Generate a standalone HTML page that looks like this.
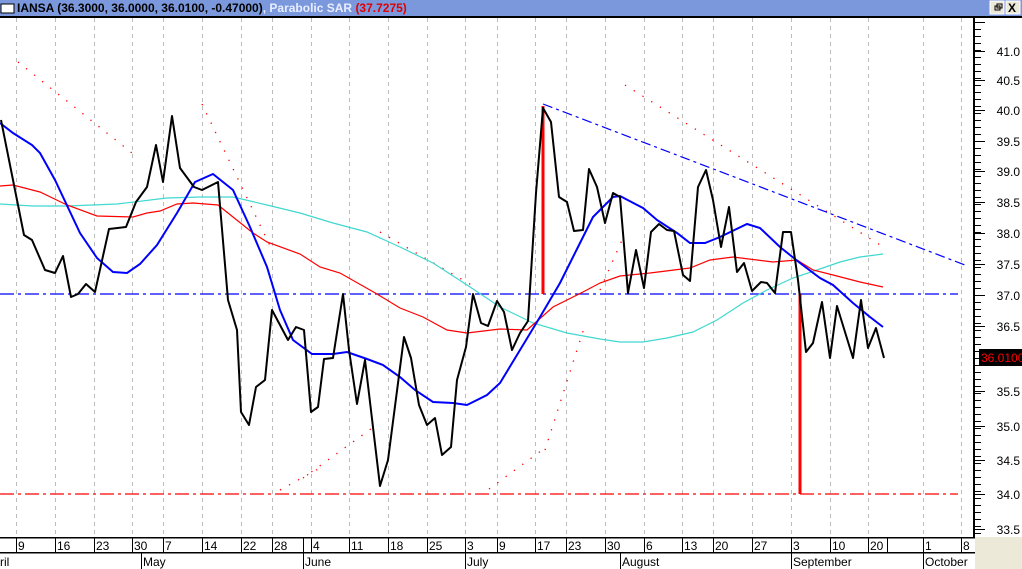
<!DOCTYPE html>
<html><head><meta charset="utf-8"><style>
html,body{margin:0;padding:0;background:#fff;width:1022px;height:569px;overflow:hidden}
svg{display:block;font-family:"Liberation Sans",sans-serif}
</style></head><body>
<svg width="1022" height="569" viewBox="0 0 1022 569" xmlns="http://www.w3.org/2000/svg">
<rect x="0" y="0" width="1022" height="569" fill="#fff"/>
<rect x="0" y="0" width="1022" height="16" fill="#7b98dd"/>
<rect x="1" y="4" width="13" height="9" fill="#fff" stroke="#000" stroke-width="1"/>
<text x="17" y="12" font-size="12" font-weight="bold"><tspan fill="#000">IANSA (36.3000, 36.0000, 36.0100, -0.47000)</tspan><tspan fill="#e8eeff">, Parabolic SAR </tspan><tspan fill="#e00000">(37.7275)</tspan></text>
<rect x="990" y="1" width="14" height="13" fill="#ece9d8" stroke="#fff"/>
<rect x="995" y="6" width="5" height="4" fill="none" stroke="#000"/>
<rect x="997" y="4" width="5" height="4" fill="none" stroke="#000"/>
<rect x="1006" y="1" width="14" height="13" fill="#ece9d8" stroke="#fff"/>
<text x="1008" y="12" font-size="12" font-weight="bold">X</text>
<rect x="0" y="16" width="1022" height="2" fill="#000"/>
<g stroke="#bbb" stroke-width="1" stroke-dasharray="4,4">
<line x1="16.5" y1="18" x2="16.5" y2="537"/><line x1="55.5" y1="18" x2="55.5" y2="537"/><line x1="94.5" y1="18" x2="94.5" y2="537"/><line x1="132.5" y1="18" x2="132.5" y2="537"/><line x1="163.5" y1="18" x2="163.5" y2="537"/><line x1="202.5" y1="18" x2="202.5" y2="537"/><line x1="241.5" y1="18" x2="241.5" y2="537"/><line x1="272.5" y1="18" x2="272.5" y2="537"/><line x1="311.5" y1="18" x2="311.5" y2="537"/><line x1="349.5" y1="18" x2="349.5" y2="537"/><line x1="388.5" y1="18" x2="388.5" y2="537"/><line x1="427.5" y1="18" x2="427.5" y2="537"/><line x1="465.5" y1="18" x2="465.5" y2="537"/><line x1="497.5" y1="18" x2="497.5" y2="537"/><line x1="535.5" y1="18" x2="535.5" y2="537"/><line x1="566.5" y1="18" x2="566.5" y2="537"/><line x1="605.5" y1="18" x2="605.5" y2="537"/><line x1="644.5" y1="18" x2="644.5" y2="537"/><line x1="682.5" y1="18" x2="682.5" y2="537"/><line x1="713.5" y1="18" x2="713.5" y2="537"/><line x1="752.5" y1="18" x2="752.5" y2="537"/><line x1="791.5" y1="18" x2="791.5" y2="537"/><line x1="830.5" y1="18" x2="830.5" y2="537"/><line x1="868.5" y1="18" x2="868.5" y2="537"/><line x1="923.5" y1="18" x2="923.5" y2="537"/><line x1="961.5" y1="18" x2="961.5" y2="537"/>
</g>
<g stroke="#f00" stroke-width="1.3" stroke-dasharray="1.3,9" fill="none">
<line x1="18" y1="62" x2="132" y2="153"/>
<line x1="202" y1="104" x2="272" y2="250"/>
<line x1="280" y1="490" x2="320" y2="468"/>
<line x1="303" y1="478" x2="375" y2="426"/>
<line x1="380" y1="232" x2="475" y2="287"/>
<line x1="489" y1="489" x2="545" y2="448"/>
<line x1="545" y1="450" x2="585" y2="325"/>
<line x1="600" y1="290" x2="622" y2="240"/>
<line x1="625" y1="85" x2="885" y2="248"/>
</g>
<line x1="0" y1="294" x2="958" y2="294" stroke="#00f" stroke-width="1.2" stroke-dasharray="14,4,3,4"/>
<line x1="0" y1="494" x2="958" y2="494" stroke="#f00" stroke-width="1.2" stroke-dasharray="14,4,3,4"/>
<line x1="543" y1="104" x2="965" y2="265" stroke="#00f" stroke-width="1.2" stroke-dasharray="10,4,3,4"/>
<polyline fill="none" stroke="#40d8d0" stroke-width="1.2" points="0,204 33,206 67,206 117,204 167,198 200,197 233,197 267,205 300,213 333,223 367,232 400,247 433,263 467,285 500,307 533,323 567,333 600,339 620,342 643,342 667,338 693,332 717,320 743,303 767,290 793,278 817,270 840,262 860,257 883,254"/>
<polyline fill="none" stroke="#f00" stroke-width="1.2" points="0,186 13,185 40,192 67,205 97,216 133,217 147,213 160,211 177,204 193,203 218,205 233,217 253,233 267,242 300,254 320,267 340,273 377,294 400,308 423,317 447,330 467,333 500,329 527,330 553,307 583,292 600,283 620,276 650,273 690,268 710,260 733,257 773,262 797,260 813,270 833,275 860,282 883,287"/>
<rect x="541.5" y="106" width="3" height="188" fill="#f00"/>
<rect x="798.5" y="294" width="3" height="200" fill="#f00"/>
<polyline fill="none" stroke="#00f" stroke-width="2" points="0,123 13,133 32,145 40,153 55,180 80,233 97,258 113,272 127,273 140,264 157,245 177,213 195,182 213,174 233,190 250,227 267,267 280,310 293,340 312,354 333,354 347,352 367,359 383,365 400,377 415,390 433,402 453,403 467,405 487,395 500,383 520,350 540,317 560,283 580,243 593,217 613,197 620,196 643,208 657,220 677,233 690,243 705,243 720,237 747,224 760,228 780,247 800,263 820,278 833,285 853,303 870,317 883,327"/>
<polyline fill="none" stroke="#000" stroke-width="2" stroke-linejoin="round" points="1,120 24,235 32,240 45,270 55,273 63,256 71,297 78,294 86,284 95,292 109,229 126,227 136,202 147,187 156,145 163,182 172,116 180,168 194,187 202,190 218,182 228,300 237,330 241,412 249,425 256,387 265,380 272,310 288,340 296,327 304,330 311,412 318,407 324,359 333,358 343,294 349,350 357,404 365,360 380,486 388,460 404,337 411,358 419,405 427,425 435,418 442,455 451,447 457,380 466,347 473,294 481,323 488,326 497,301 504,312 512,350 520,333 528,321 536,193 543,108 551,122 559,197 567,202 574,231 583,230 589,169 597,187 605,223 613,193 620,197 628,293 636,250 644,288 651,232 659,224 667,230 674,231 683,275 690,281 698,187 706,170 713,200 721,247 729,207 737,272 744,263 752,291 761,282 767,283 775,293 783,232 791,232 798,280 806,352 813,343 822,302 830,358 837,306 853,358 861,300 868,348 876,328 884,358"/>
<rect x="973" y="18" width="2" height="519" fill="#000"/>
<g stroke="#000" stroke-width="1">
<line x1="975" y1="51.5" x2="985" y2="51.5"/><line x1="975" y1="80.5" x2="985" y2="80.5"/><line x1="975" y1="110.5" x2="985" y2="110.5"/><line x1="975" y1="141.5" x2="985" y2="141.5"/><line x1="975" y1="171.5" x2="985" y2="171.5"/><line x1="975" y1="202.5" x2="985" y2="202.5"/><line x1="975" y1="233.5" x2="985" y2="233.5"/><line x1="975" y1="264.5" x2="985" y2="264.5"/><line x1="975" y1="295.5" x2="985" y2="295.5"/><line x1="975" y1="326.5" x2="985" y2="326.5"/><line x1="975" y1="358.5" x2="985" y2="358.5"/><line x1="975" y1="391.5" x2="985" y2="391.5"/><line x1="975" y1="426.5" x2="985" y2="426.5"/><line x1="975" y1="460.5" x2="985" y2="460.5"/><line x1="975" y1="494.5" x2="985" y2="494.5"/><line x1="975" y1="529.5" x2="985" y2="529.5"/><line x1="975" y1="22.5" x2="985" y2="22.5"/>
</g>
<line x1="978" y1="22" x2="978" y2="537" stroke="#000" stroke-width="6" stroke-dasharray="1,6"/>
<g font-size="12" fill="#000" text-anchor="end">
<text x="1020" y="56">41.0</text><text x="1020" y="85">40.5</text><text x="1020" y="115">40.0</text><text x="1020" y="146">39.5</text><text x="1020" y="176">39.0</text><text x="1020" y="207">38.5</text><text x="1020" y="238">38.0</text><text x="1020" y="269">37.5</text><text x="1020" y="300">37.0</text><text x="1020" y="331">36.5</text><text x="1020" y="396">35.5</text><text x="1020" y="431">35.0</text><text x="1020" y="465">34.5</text><text x="1020" y="499">34.0</text><text x="1020" y="534">33.5</text>
</g>
<rect x="979" y="349" width="43" height="17" fill="#000"/>
<text x="981" y="362" font-size="12" fill="#f00">36.01000</text>
<rect x="975" y="537" width="47" height="32" fill="#ece9d8"/>
<rect x="0" y="537" width="975" height="1.5" fill="#000"/>
<rect x="0" y="552" width="975" height="1.5" fill="#000"/>
<g stroke="#000" stroke-width="1">
<line x1="16.5" y1="538" x2="16.5" y2="553"/><line x1="55.5" y1="538" x2="55.5" y2="553"/><line x1="94.5" y1="538" x2="94.5" y2="553"/><line x1="132.5" y1="538" x2="132.5" y2="553"/><line x1="163.5" y1="538" x2="163.5" y2="553"/><line x1="202.5" y1="538" x2="202.5" y2="553"/><line x1="241.5" y1="538" x2="241.5" y2="553"/><line x1="272.5" y1="538" x2="272.5" y2="553"/><line x1="303.5" y1="538" x2="303.5" y2="553"/><line x1="311.5" y1="538" x2="311.5" y2="553"/><line x1="349.5" y1="538" x2="349.5" y2="553"/><line x1="388.5" y1="538" x2="388.5" y2="553"/><line x1="427.5" y1="538" x2="427.5" y2="553"/><line x1="465.5" y1="538" x2="465.5" y2="553"/><line x1="497.5" y1="538" x2="497.5" y2="553"/><line x1="535.5" y1="538" x2="535.5" y2="553"/><line x1="566.5" y1="538" x2="566.5" y2="553"/><line x1="605.5" y1="538" x2="605.5" y2="553"/><line x1="644.5" y1="538" x2="644.5" y2="553"/><line x1="682.5" y1="538" x2="682.5" y2="553"/><line x1="713.5" y1="538" x2="713.5" y2="553"/><line x1="752.5" y1="538" x2="752.5" y2="553"/><line x1="791.5" y1="538" x2="791.5" y2="553"/><line x1="830.5" y1="538" x2="830.5" y2="553"/><line x1="868.5" y1="538" x2="868.5" y2="553"/><line x1="887.5" y1="538" x2="887.5" y2="553"/><line x1="923.5" y1="538" x2="923.5" y2="553"/><line x1="961.5" y1="538" x2="961.5" y2="553"/>
<line x1="141.5" y1="553" x2="141.5" y2="569"/><line x1="303.5" y1="553" x2="303.5" y2="569"/><line x1="465.5" y1="553" x2="465.5" y2="569"/><line x1="620.5" y1="553" x2="620.5" y2="569"/><line x1="791.5" y1="553" x2="791.5" y2="569"/><line x1="923.5" y1="553" x2="923.5" y2="569"/>
</g>
<g font-size="12" fill="#000">
<text x="18" y="550">9</text><text x="57" y="550">16</text><text x="96" y="550">23</text><text x="134" y="550">30</text><text x="165" y="550">7</text><text x="204" y="550">14</text><text x="243" y="550">22</text><text x="274" y="550">28</text><text x="313" y="550">4</text><text x="351" y="550">11</text><text x="390" y="550">18</text><text x="429" y="550">25</text><text x="467" y="550">3</text><text x="499" y="550">9</text><text x="537" y="550">17</text><text x="568" y="550">23</text><text x="607" y="550">30</text><text x="646" y="550">6</text><text x="684" y="550">13</text><text x="715" y="550">20</text><text x="754" y="550">27</text><text x="793" y="550">3</text><text x="832" y="550">10</text><text x="870" y="550">20</text><text x="925" y="550">1</text><text x="963" y="550">8</text>
<text x="0" y="566">ril</text><text x="143" y="566">May</text><text x="305" y="566">June</text><text x="467" y="566">July</text><text x="622" y="566">August</text><text x="793" y="566">September</text><text x="925" y="566">October</text>
</g>
</svg>
</body></html>
